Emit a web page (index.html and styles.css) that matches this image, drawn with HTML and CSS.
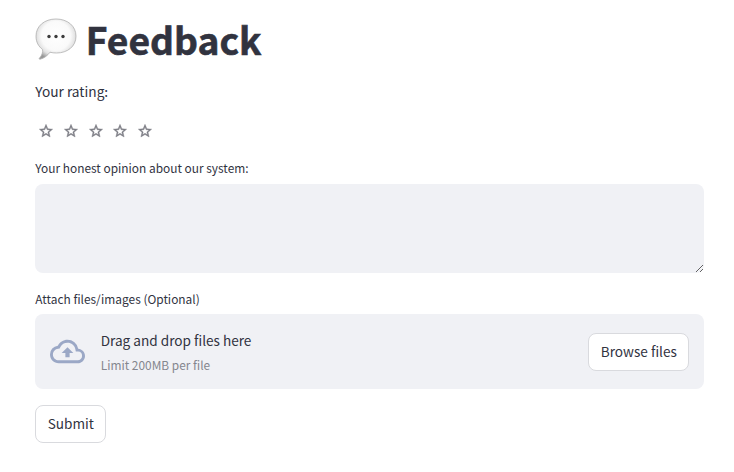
FILE: index.html
```html
<!DOCTYPE html>
<html lang="en">
<head>
<meta charset="utf-8">
<title>Feedback</title>
<link rel="stylesheet" href="styles.css">
</head>
<body>
<svg class="defs" width="0" height="0" aria-hidden="true">
  <symbol id="star" viewBox="0 0 24 24"><path d="M22 9.24l-7.19-.62L12 2 9.19 8.63 2 9.24l5.46 4.73L5.82 21 12 17.27 18.18 21l-1.63-7.03L22 9.24zM12 15.4l-3.76 2.27 1-4.28-3.32-2.88 4.38-.38L12 6.1l1.71 4.04 4.38.38-3.32 2.88 1 4.28L12 15.4z"/></symbol>
</svg>
<main class="form">
  <h1 class="title">
    <svg class="bubble" viewBox="0 0 42 42" aria-hidden="true">
      <defs>
        <radialGradient id="shade" cx=".5" cy=".42" r=".6">
          <stop offset="0" stop-color="#fff"/>
          <stop offset=".6" stop-color="#fafafa"/>
          <stop offset=".8" stop-color="#e2e2e2"/>
          <stop offset="1" stop-color="#989898"/>
        </radialGradient>
      </defs>
      <path d="M21 1C32.500 1 41 8 41 18.200S32.500 35 21.500 35C19 35 17 34.800 15 34.200C12.500 37.500 9 40.500 5 41.200C4 41.300 4 40.600 4.600 40C6.800 37.600 8 34.500 7.600 31.500C3.500 28.500 1 24 1 18.200C1 8 9.500 1 21 1Z" fill="url(#shade)" stroke="#b0b0b0" stroke-width=".8"/>
      <g fill="#3c3c3c"><circle cx="14" cy="18.500" r="1.700"/><circle cx="21" cy="18.500" r="1.700"/><circle cx="28" cy="18.500" r="1.700"/></g>
    </svg>
    <span>Feedback</span>
  </h1>
  <p class="rating-label">Your rating:</p>
  <div class="stars">
    <svg><use href="#star"/></svg><svg><use href="#star"/></svg><svg><use href="#star"/></svg><svg><use href="#star"/></svg><svg><use href="#star"/></svg>
  </div>
  <label class="label" for="opinion">Your honest opinion about our system:</label>
  <textarea class="opinion" id="opinion"></textarea>
  <div class="label">Attach files/images (Optional)</div>
  <section class="dropzone">
    <svg class="cloud" viewBox="0 0 24 24"><path d="M19.35 10.04A7.49 7.49 0 0 0 12 4C9.11 4 6.6 5.64 5.35 8.04A5.994 5.994 0 0 0 0 14c0 3.310 2.690 6 6 6h13c2.760 0 5-2.240 5-5 0-2.640-2.050-4.780-4.650-4.960zM19 18H6c-2.210 0-4-1.790-4-4 0-2.050 1.530-3.760 3.560-3.970l1.070-.11.5-.95A5.469 5.469 0 0 1 12 6c2.620 0 4.880 1.860 5.390 4.430l.3 1.500 1.530.11A2.980 2.980 0 0 1 22 15c0 1.650-1.350 3-3 3zM8 13h2.550v3h2.900v-3H16l-4-4z"/></svg>
    <div class="drop-text">
      <span class="drop-main">Drag and drop files here</span>
      <span class="drop-limit">Limit 200MB per file</span>
    </div>
    <button class="button browse">Browse files</button>
  </section>
  <button class="button submit">Submit</button>
</main>
</body>
</html>
```
FILE: styles.css
```css
* { box-sizing: border-box; }
body {
  margin: 0;
  background: #fff;
  color: #31333f;
  font-family: "Noto Sans CJK SC", "Noto Sans", sans-serif;
  font-size: 13.7px;
}
.defs { position: absolute; }
.form {
  display: flex;
  flex-direction: column;
  align-items: flex-start;
  width: 669px;
  margin-left: 35.300px;
  padding-top: 16px;
}
.title {
  display: flex;
  align-items: center;
  gap: 8.500px;
  height: 46px;
  margin: 0;
  font-size: 37.2px;
  font-weight: 700;
  line-height: 46px;
  -webkit-text-stroke: .6px #31333f;
}
.bubble { width: 42px; height: 42px; }
.rating-label { margin: 17px 0 0; line-height: 24px; }
.stars {
  display: flex;
  gap: 8.700px;
  margin: 20px 0 0 3px;
}
.stars svg {
  width: 16px;
  height: 16px;
  fill: #7b7c84;
  stroke: #7b7c84;
  stroke-width: .6px;
}
.label {
  display: block;
  height: 20px;
  margin-top: 19px;
  font-size: 11.9px;
  line-height: 20px;
}
.opinion {
  display: block;
  width: 100%;
  height: 88.500px;
  margin: 6px 0 -2.500px;
  border: 0;
  border-radius: 8px;
  outline: 0;
  background: #f0f1f5;
  resize: vertical;
}
.dropzone {
  display: flex;
  align-items: center;
  width: 100%;
  height: 75px;
  margin-top: 5.200px;
  padding: 0 15px;
  border-radius: 8px;
  background: #f0f1f5;
}
.cloud { width: 35px; height: 35px; margin-right: 15.400px; fill: #9ba8c6; }
.drop-text { display: flex; flex-direction: column; margin-right: auto; }
.drop-main { font-size: 13.6px; line-height: 25px; }
.drop-limit { color: #84868e; font-size: 11.9px; line-height: 23px; }
.button {
  height: 38px;
  padding: 0 0 1px;
  border: 1px solid #d9dade;
  border-radius: 8px;
  background: #fff;
  color: #31333f;
  font: inherit;
  font-size: 13.6px;
  line-height: 33px;
}
.browse { width: 101px; }
.submit { width: 71px; margin-top: 15.400px; }
```
